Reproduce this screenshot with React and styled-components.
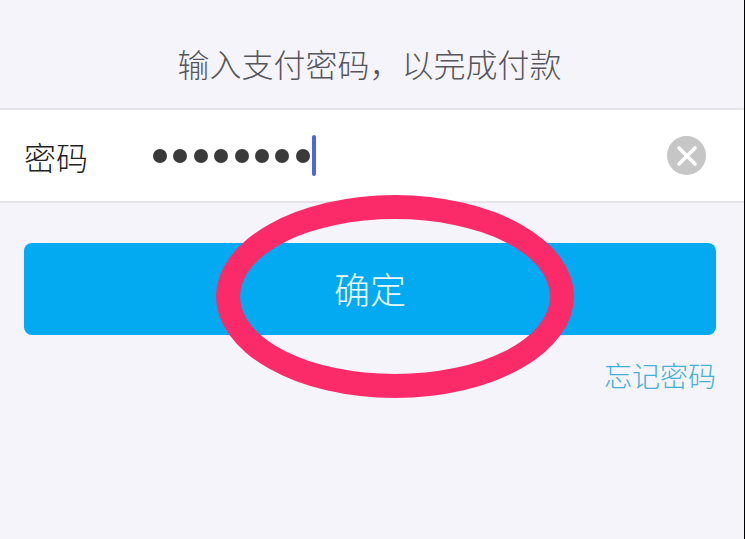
import React from "react";
import styled, { createGlobalStyle } from "styled-components";

const GlobalStyle = createGlobalStyle`
  html, body {
    margin: 0;
    padding: 0;
    background: #f4f4fa;
  }
  * {
    box-sizing: border-box;
  }
`;

const Page = styled.div`
  position: relative;
  width: 745px;
  height: 539px;
  overflow: hidden;
  background: #f4f4fa;
  border-right: 1px solid #000;
  font-family: "Noto Sans CJK SC", "Noto Sans", sans-serif;
  font-weight: 300;
`;

const Title = styled.div`
  height: 108px;
  padding: 18px 5px 0 0;
  display: flex;
  align-items: center;
  justify-content: center;
  font-size: 32px;
  color: #55555a;
`;

const InputRow = styled.div`
  height: 95px;
  display: flex;
  align-items: center;
  padding: 0 38px 0 24px;
  background: #fff;
  border-top: 2px solid #e4e4ea;
  border-bottom: 2px solid #e4e4ea;
`;

const Label = styled.div`
  width: 129px;
  font-size: 32px;
  color: #222;
`;

const Dots = styled.div`
  display: flex;
  gap: 6.4px;
`;

const Dot = styled.span`
  width: 14px;
  height: 14px;
  border-radius: 50%;
  background: #3a3a3a;
`;

const Caret = styled.span`
  width: 4px;
  height: 41px;
  margin-left: 2px;
  border-radius: 2px;
  background: #4a68d6;
`;

const ClearButton = styled.div`
  margin-left: auto;
  width: 39px;
  height: 39px;
  border-radius: 50%;
  background: #c6c6c6;
  display: flex;
  align-items: center;
  justify-content: center;
`;

const Actions = styled.div`
  padding: 40px 28px 0 24px;
  display: flex;
  flex-direction: column;
  align-items: flex-end;
`;

const ConfirmButton = styled.div`
  width: 100%;
  height: 92px;
  padding-bottom: 2px;
  border-radius: 8px;
  background: #03a9f1;
  color: #e8f8ff;
  font-size: 36px;
  display: flex;
  align-items: center;
  justify-content: center;
`;

const ForgotLink = styled.div`
  margin-top: 20px;
  font-size: 28px;
  line-height: 40px;
  color: #45afd4;
`;

/* the hand drawn red ring lying over the button */
const Ring = styled.div`
  position: absolute;
  left: 216px;
  top: 195px;
  width: 358px;
  height: 203px;
  border: 24px solid #fb2a68;
  border-radius: 50%;
`;

const App = () => {
  return (
    <Page>
      <GlobalStyle />
      <Title>输入支付密码，以完成付款</Title>
      <InputRow>
        <Label>密码</Label>
        <Dots>
          {Array.from({ length: 8 }).map((_, i) => (
            <Dot key={i} />
          ))}
        </Dots>
        <Caret />
        <ClearButton>
          <svg width="24" height="24" viewBox="0 0 24 24">
            <path
              d="M4 4 L20 20 M20 4 L4 20"
              stroke="#fff"
              strokeWidth="3.6"
              strokeLinecap="round"
              fill="none"
            />
          </svg>
        </ClearButton>
      </InputRow>
      <Actions>
        <ConfirmButton>确定</ConfirmButton>
        <ForgotLink>忘记密码</ForgotLink>
      </Actions>
      <Ring />
    </Page>
  );
};

export default App;
